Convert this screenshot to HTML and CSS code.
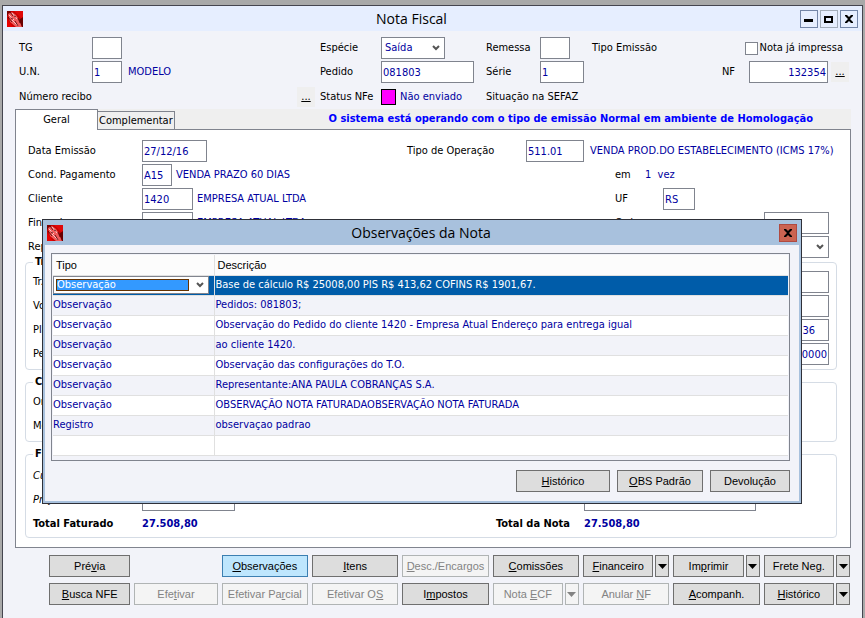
FILE: index.html
```
<!DOCTYPE html>
<html lang="pt-BR">
<head>
  <meta charset="UTF-8">
  <title>Nota Fiscal</title>
  <link rel="stylesheet" href="styles.css">
</head>
<body>

  <svg class="symbols">
    <symbol id="logo" viewBox="0 0 16 16">
      <rect width="16" height="16" fill="#c80000"/>
      <path d="M7 0h9v9z" fill="#e00808"/>
      <path d="M0 0h4L0 5z" fill="#7a0000"/>
      <path d="M1 3l4-2 4 3 4 6 2 6H9L3 11z" fill="#f05a5a"/>
      <path d="M0 8l6 8H0z" fill="#e80000"/>
      <path d="M12 9l4-3v10h-1z" fill="#6a0000"/>
      <path d="M2 4l5 5M5 2l5 6M5 9l6 6" fill="none" stroke="#ffc4c4"/>
      <path d="M3 1l3 4M1 6l4 5M7 5l2 1M8 10l3 5M11 7l2 5M4 7l2 1" fill="none" stroke="#4c0000" stroke-width=".8"/>
    </symbol>
    <symbol id="close" viewBox="0 0 10 8">
      <path d="M1 0h2l2 2 2-2h2v1L6 4l3 3v1H7L5 6 3 8H1V7l3-3-3-3z" fill="#000"/>
    </symbol>
    <symbol id="arrow" viewBox="0 0 9 5">
      <path d="M0 0h9L4.500 5z" fill="currentColor"/>
    </symbol>
  </svg>

  <main class="window">
    <header class="titlebar">
      <svg class="logo"><use href="#logo"/></svg>
      <h1>Nota Fiscal</h1>
      <div class="controls">
        <button aria-label="Minimizar"><svg width="10" height="8"><path d="M0 4h9v3H0z"/></svg></button>
        <button class="soft" aria-label="Maximizar"><svg width="10" height="8"><path d="M0 1h9v7H0zM2 3v3h5V3z" fill-rule="evenodd"/></svg></button>
        <button aria-label="Fechar"><svg width="10" height="8"><use href="#close"/></svg></button>
      </div>
    </header>

    <section class="head">
      <label for="tg">TG</label>
      <div class="cell"><input id="tg" class="w30"></div>
      <span></span>
      <label for="especie">Espécie</label>
      <div class="cell"><select id="especie" class="w64"><option>Saída</option></select></div>
      <label for="remessa">Remessa</label>
      <div class="cell"><input id="remessa" class="w30"></div>
      <div class="cell split">
        <span>Tipo Emissão</span>
        <label class="printed"><input type="checkbox"> Nota já impressa</label>
      </div>

      <label for="un">U.N.</label>
      <div class="cell"><input id="un" class="w30" value="1"><span class="value">MODELO</span></div>
      <span></span>
      <label for="pedido">Pedido</label>
      <div class="cell"><input id="pedido" class="w93" value="081803"></div>
      <label for="serie">Série</label>
      <div class="cell"><input id="serie" class="w44" value="1"></div>
      <div class="cell nf">
        <label for="nf">NF</label>
        <input id="nf" class="w79 right" value="132354">
        <button class="more">...</button>
      </div>

      <span>Número recibo</span>
      <span></span>
      <button class="more">...</button>
      <span>Status NFe</span>
      <div class="cell"><i class="status"></i><span class="value tight">Não enviado</span></div>
      <span class="wide">Situação na SEFAZ</span>
    </section>

    <nav class="tabs">
      <button class="tab active">Geral</button>
      <button class="tab">Complementar</button>
      <strong class="notice">O sistema está operando com o tipo de emissão Normal em ambiente de Homologação</strong>
    </nav>

    <section class="page">
      <div class="row">
        <label for="data">Data Emissão</label>
        <div class="cell"><input id="data" class="w65" value="27/12/16"></div>
        <label for="operacao">Tipo de Operação</label>
        <div class="cell"><input id="operacao" class="w58" value="511.01"><span class="value">VENDA PROD.DO ESTABELECIMENTO (ICMS 17%)</span></div>
      </div>
      <div class="row side">
        <label for="cond">Cond. Pagamento</label>
        <div class="cell"><input id="cond" class="w30" value="A15"><span class="value tight">VENDA PRAZO 60 DIAS</span></div>
        <span>em</span>
        <div class="blue">1 &nbsp;vez</div>
      </div>
      <div class="row side">
        <label for="cliente">Cliente</label>
        <div class="cell"><input id="cliente" class="w51" value="1420"><span class="value tight">EMPRESA ATUAL LTDA</span></div>
        <label for="uf">UF</label>
        <div class="cell uf"><input id="uf" class="w32" value="RS"></div>
      </div>
      <div class="row side">
        <label for="fin">Fin. cobrança</label>
        <div class="cell"><input id="fin" class="w51" value="1420"><span class="value tight">EMPRESA ATUAL LTDA</span></div>
        <label for="ordem">Ordem</label>
        <div class="cell end"><input id="ordem" class="w65"></div>
      </div>
      <div class="row side">
        <label for="rep">Rep.</label>
        <div class="cell"><input id="rep" class="w51"></div>
        <label for="tipo">Tipo</label>
        <div class="cell end"><select id="tipo" class="w65"><option></option></select></div>
      </div>

      <fieldset class="group">
        <legend>Tr.</legend>
        <div class="line"><label for="transp">Tr.</label><input id="transp" class="w65"></div>
        <div class="line"><label for="volumes">Vol.</label><input id="volumes" class="w65"></div>
        <div class="line"><label for="placa">Placa</label><input id="placa" class="w65 right plate" value="36"></div>
        <div class="line"><label for="peso">Peso</label><input id="peso" class="w65 right" value="0,0000"></div>
      </fieldset>

      <fieldset class="group">
        <legend>Co.</legend>
        <div class="line"><span>Ord.</span></div>
        <div class="line"><span>Mod.</span></div>
      </fieldset>

      <fieldset class="group finance">
        <legend>Fin.</legend>
        <div class="totals"><em>Custo</em></div>
        <div class="totals">
          <em>Projeto</em><div class="cell"><input class="w93" aria-label="Projeto"></div>
          <span></span><div class="cell"><input class="w172" aria-label="Descrição do projeto"></div>
        </div>
        <div class="totals bold">
          <span>Total Faturado</span><span class="blue">27.508,80</span>
          <span>Total da Nota</span><span class="blue">27.508,80</span>
        </div>
      </fieldset>
    </section>

    <footer class="actions">
      <button class="btn">Pré<u>v</u>ia</button>
      <span></span>
      <button class="btn hot"><u>O</u>bservações</button>
      <button class="btn"><u>I</u>tens</button>
      <button class="btn" disabled><u>D</u>esc./Encargos</button>
      <button class="btn"><u>C</u>omissões</button>
      <div class="combo"><button class="btn"><u>F</u>inanceiro</button><button class="btn drop" aria-label="Mais"><svg width="9" height="5"><use href="#arrow"/></svg></button></div>
      <div class="combo"><button class="btn">Im<u>p</u>rimir</button><button class="btn drop" aria-label="Mais"><svg width="9" height="5"><use href="#arrow"/></svg></button></div>
      <div class="combo"><button class="btn">Frete Ne<u>g</u>.</button><button class="btn drop" aria-label="Mais"><svg width="9" height="5"><use href="#arrow"/></svg></button></div>

      <button class="btn"><u>B</u>usca NFE</button>
      <button class="btn" disabled>Efe<u>t</u>ivar</button>
      <button class="btn" disabled>Efetivar Pa<u>r</u>cial</button>
      <button class="btn" disabled>Efetivar O<u>S</u></button>
      <button class="btn">I<u>m</u>postos</button>
      <div class="combo"><button class="btn" disabled>Nota <u>E</u>CF</button><button class="btn drop" aria-label="Mais" disabled><svg width="9" height="5"><use href="#arrow"/></svg></button></div>
      <button class="btn" disabled>Anular <u>N</u>F</button>
      <button class="btn"><u>A</u>companh.</button>
      <div class="combo"><button class="btn"><u>H</u>istórico</button><button class="btn drop" aria-label="Mais"><svg width="9" height="5"><use href="#arrow"/></svg></button></div>
    </footer>
  </main>

  <div class="dialog" role="dialog" aria-labelledby="dialog-title">
    <header class="titlebar">
      <svg class="logo"><use href="#logo"/></svg>
      <h2 id="dialog-title">Observações da Nota</h2>
      <div class="controls">
        <button class="close" aria-label="Fechar"><svg width="10" height="8"><use href="#close"/></svg></button>
      </div>
    </header>
    <div class="dialog-body">
      <div class="list">
        <table>
          <thead>
            <tr><th class="type">Tipo</th><th>Descrição</th></tr>
          </thead>
          <tbody>
            <tr class="selected"><td><select aria-label="Tipo"><option>Observação</option></select></td><td>Base de cálculo R$ 25008,00 PIS R$ 413,62 COFINS R$ 1901,67.</td></tr>
            <tr><td>Observação</td><td>Pedidos: 081803;</td></tr>
            <tr><td>Observação</td><td>Observação do Pedido do cliente 1420 - Empresa Atual Endereço para entrega igual</td></tr>
            <tr><td>Observação</td><td>ao cliente 1420.</td></tr>
            <tr><td>Observação</td><td>Observação das configurações do T.O.</td></tr>
            <tr><td>Observação</td><td>Representante:ANA PAULA COBRANÇAS S.A.</td></tr>
            <tr><td>Observação</td><td>OBSERVAÇÃO NOTA FATURADAOBSERVAÇÃO NOTA FATURADA</td></tr>
            <tr><td>Registro</td><td>observaçao padrao</td></tr>
            <tr><td></td><td></td></tr>
          </tbody>
        </table>
      </div>
      <div class="dialog-actions">
        <button class="btn w94"><u>H</u>istórico</button>
        <button class="btn w86"><u>O</u>BS Padrão</button>
        <button class="btn w80">Devolução</button>
      </div>
    </div>
  </div>

</body>
</html>
```
FILE: styles.css
```
* {
  box-sizing: border-box;
}
body {
  margin: 0;
  padding: 5px 2px 0;
  background: #a9a9a9;
  color: #000;
  font: 11px/14px "DejaVu Sans Condensed", "Noto Sans", sans-serif;
}
.symbols {
  display: none;
}
.window {
  border: 1px solid #45454f;
  background: #f2f3f9;
}
button, input, select {
  font: inherit;
  margin: 0;
}
input, select {
  height: 22px;
  border: 1px solid #80848e;
  border-radius: 0;
  background: #fff;
  color: #0000a0;
  padding: 0 1px;
}
select {
  appearance: none;
  padding: 0 3px;
  background: #fff url("data:image/svg+xml,%3Csvg xmlns='http://www.w3.org/2000/svg' width='8' height='6'%3E%3Cpath d='M1 1l3 3 3-3' fill='none' stroke='%23555' stroke-width='2'/%3E%3C/svg%3E") no-repeat right 4px center;
}

/* title bars */
.titlebar {
  display: flex;
  align-items: center;
  height: 25px;
  padding: 0 4px;
  background: #e6eeff;
}
.titlebar h1, .titlebar h2 {
  flex: 1;
  margin: 0;
  text-align: center;
  font: 14px/20px "Open Sans", sans-serif;
}
.logo {
  width: 16px;
  height: 16px;
}
.controls {
  display: flex;
  gap: 2px;
}
.controls button {
  display: flex;
  align-items: center;
  justify-content: center;
  width: 18px;
  height: 18px;
  padding: 0;
  border: 1px solid #7486a8;
  background: #e6eeff;
}
.controls .soft {
  border-color: #a3adba;
}
.controls .close {
  border-color: #b04a40;
  background: #cb6351;
}

/* header fields */
.head {
  display: grid;
  grid-template-columns: 73px 205px 23px 61px 105px 54px 52px 1fr;
  grid-template-rows: 24px 24px 25px;
  align-items: center;
  padding: 5px 13px 0 16px;
}
.cell {
  display: flex;
  align-items: center;
  white-space: nowrap;
}
.value {
  margin-left: 6px;
  color: #0000a0;
}
.tight {
  margin-left: 4px;
}
.blue {
  color: #0000a0;
}
.split {
  justify-content: space-between;
}
.printed {
  display: flex;
  align-items: center;
  gap: 2px;
  margin-right: 6px;
}
.printed input {
  appearance: none;
  width: 13px;
  height: 13px;
}
.nf {
  justify-content: flex-end;
}
.nf label {
  margin-right: 14px;
}
.nf .more {
  margin-left: 3px;
}
.wide {
  grid-column: span 3;
}
.more {
  width: 18px;
  height: 20px;
  padding: 0;
  border: none;
  background: #efefef;
  text-decoration: underline;
}
.status {
  width: 15px;
  height: 16px;
  border: 1px solid #000;
  background: #f0f;
}
.right {
  text-align: right;
}
.w30 { width: 30px; }
.w32 { width: 32px; }
.w44 { width: 44px; }
.w51 { width: 51px; }
.w58 { width: 58px; }
.w64 { width: 64px; }
.w65 { width: 65px; }
.w79 { width: 79px; }
.w80 { width: 80px; }
.w86 { width: 86px; }
.w93 { width: 93px; }
.w94 { width: 94px; }
.w172 { width: 172px; }

/* tabs */
.tabs {
  display: flex;
  align-items: flex-end;
  height: 20px;
  margin: 0 11px 0 12px;
  background: #efefef;
}
.tab {
  height: 18px;
  padding: 0 1px;
  border: 1px solid #80848e;
  border-width: 1px 1px 0 0;
  background: #efefef;
  color: #000;
}
.tab.active {
  position: relative;
  width: 83px;
  height: 21px;
  margin-bottom: -1px;
  border-left-width: 1px;
  background: #fff;
}
.notice {
  flex: 1;
  padding-right: 38px;
  text-align: right;
  line-height: 20px;
  color: #00f;
  white-space: nowrap;
}

/* tab page */
.page {
  margin: 0 11px 0 12px;
  padding: 9px 13px 9px 9px;
  border: 1px solid #80848e;
  background: #fff;
}
.row {
  display: grid;
  grid-template-columns: 114px 265px 119px 1fr;
  align-items: center;
  height: 24px;
  padding-left: 3px;
  white-space: nowrap;
}
.side {
  grid-template-columns: 114px 473px 30px 1fr;
}
.uf {
  padding-left: 18px;
}
.end {
  justify-content: flex-end;
  padding-right: 8px;
}
.group {
  margin: 0 0 9px;
  padding: 5px 7px 3px;
  border: 1px solid #d5dce5;
  border-radius: 4px;
}
.group legend {
  height: 6px;
  padding: 0 2px;
  line-height: 6px;
  font-weight: bold;
}
.group.finance {
  margin-bottom: 0;
  padding-top: 7px;
  padding-bottom: 1px;
}
.line {
  display: flex;
  align-items: center;
  justify-content: space-between;
  height: 24px;
}
.plate {
  padding-right: 13px;
}
.totals {
  display: grid;
  grid-template-columns: 109px 354px 88px 1fr;
  align-items: center;
  height: 24px;
}
.bold {
  font-weight: bold;
}

/* bottom buttons */
.actions {
  display: grid;
  grid-template-columns: 81fr 83fr 86fr 86fr 86fr 86fr 86fr 86fr 86fr;
  gap: 6px 4px;
  padding: 7px 12px 13px 46px;
}
.btn {
  height: 22px;
  padding: 0;
  border: 1px solid #6f6f6f;
  background: #ddd;
  color: #000;
  font: 11px/14px "Liberation Sans", sans-serif;
  white-space: nowrap;
}
.btn:disabled {
  border-color: #b0b4b4;
  background: #f4f4f4;
  color: #838383;
}
.btn.hot {
  border-color: #3c7fb1;
  background: #bee6fd;
}
.combo {
  display: flex;
  gap: 2px;
}
.combo .btn {
  flex: 1;
}
.combo .drop {
  display: flex;
  align-items: center;
  justify-content: center;
  flex: 0 0 14px;
}

/* dialog over the form */
.dialog {
  position: absolute;
  top: 219px;
  left: 42px;
  right: 63px;
  border: 1px solid #2e3038;
  background: #a8c1dd;
}
.dialog .titlebar {
  background: none;
}
.dialog-body {
  margin: 0 2px 2px;
  padding: 8px 9px 9px 6px;
  background: #f2f3f9;
}
.list {
  height: 208px;
  padding: 1px;
  border: 1px solid #80848e;
  overflow: hidden;
}
table {
  width: 100%;
  border-collapse: collapse;
  table-layout: fixed;
}
th, td {
  height: 20px;
  padding: 0;
  border-bottom: 1px solid #e0e0e0;
  text-align: left;
  font-weight: normal;
  white-space: nowrap;
}
th {
  background: #fcfcfc;
  font: 11px/14px "Liberation Sans", sans-serif;
  padding-left: 3px;
}
.type {
  width: 161px;
}
td {
  color: #0000a0;
}
th + th, td + td {
  border-left: 1px solid #e0e0e0;
}
td + td {
  padding-left: 1px;
}
tbody tr {
  background: #fff;
}
tbody tr:nth-child(even) {
  background: #f2f3f9;
}
tbody .selected td {
  background: #005ca9;
  color: #fff;
}
.selected select {
  display: block;
  width: 156px;
  height: 18px;
  color: #fff;
  background-image:
    url("data:image/svg+xml,%3Csvg xmlns='http://www.w3.org/2000/svg' width='8' height='6'%3E%3Cpath d='M1 1l3 3 3-3' fill='none' stroke='%23555' stroke-width='2'/%3E%3C/svg%3E"),
    url("data:image/svg+xml,%3Csvg xmlns='http://www.w3.org/2000/svg' width='133' height='12'%3E%3Crect x='.5' y='.5' width='132' height='11' fill='%2339f' stroke='%23c60'/%3E%3Crect x='.5' y='.5' width='132' height='11' fill='none' stroke='%23000' stroke-dasharray='1'/%3E%3C/svg%3E");
  background-position: right 4px center, left 2px center;
  background-repeat: no-repeat;
}
.selected option {
  color: #0000a0;
}
.dialog-actions {
  display: flex;
  justify-content: flex-end;
  gap: 7px;
  margin-top: 9px;
}
```
